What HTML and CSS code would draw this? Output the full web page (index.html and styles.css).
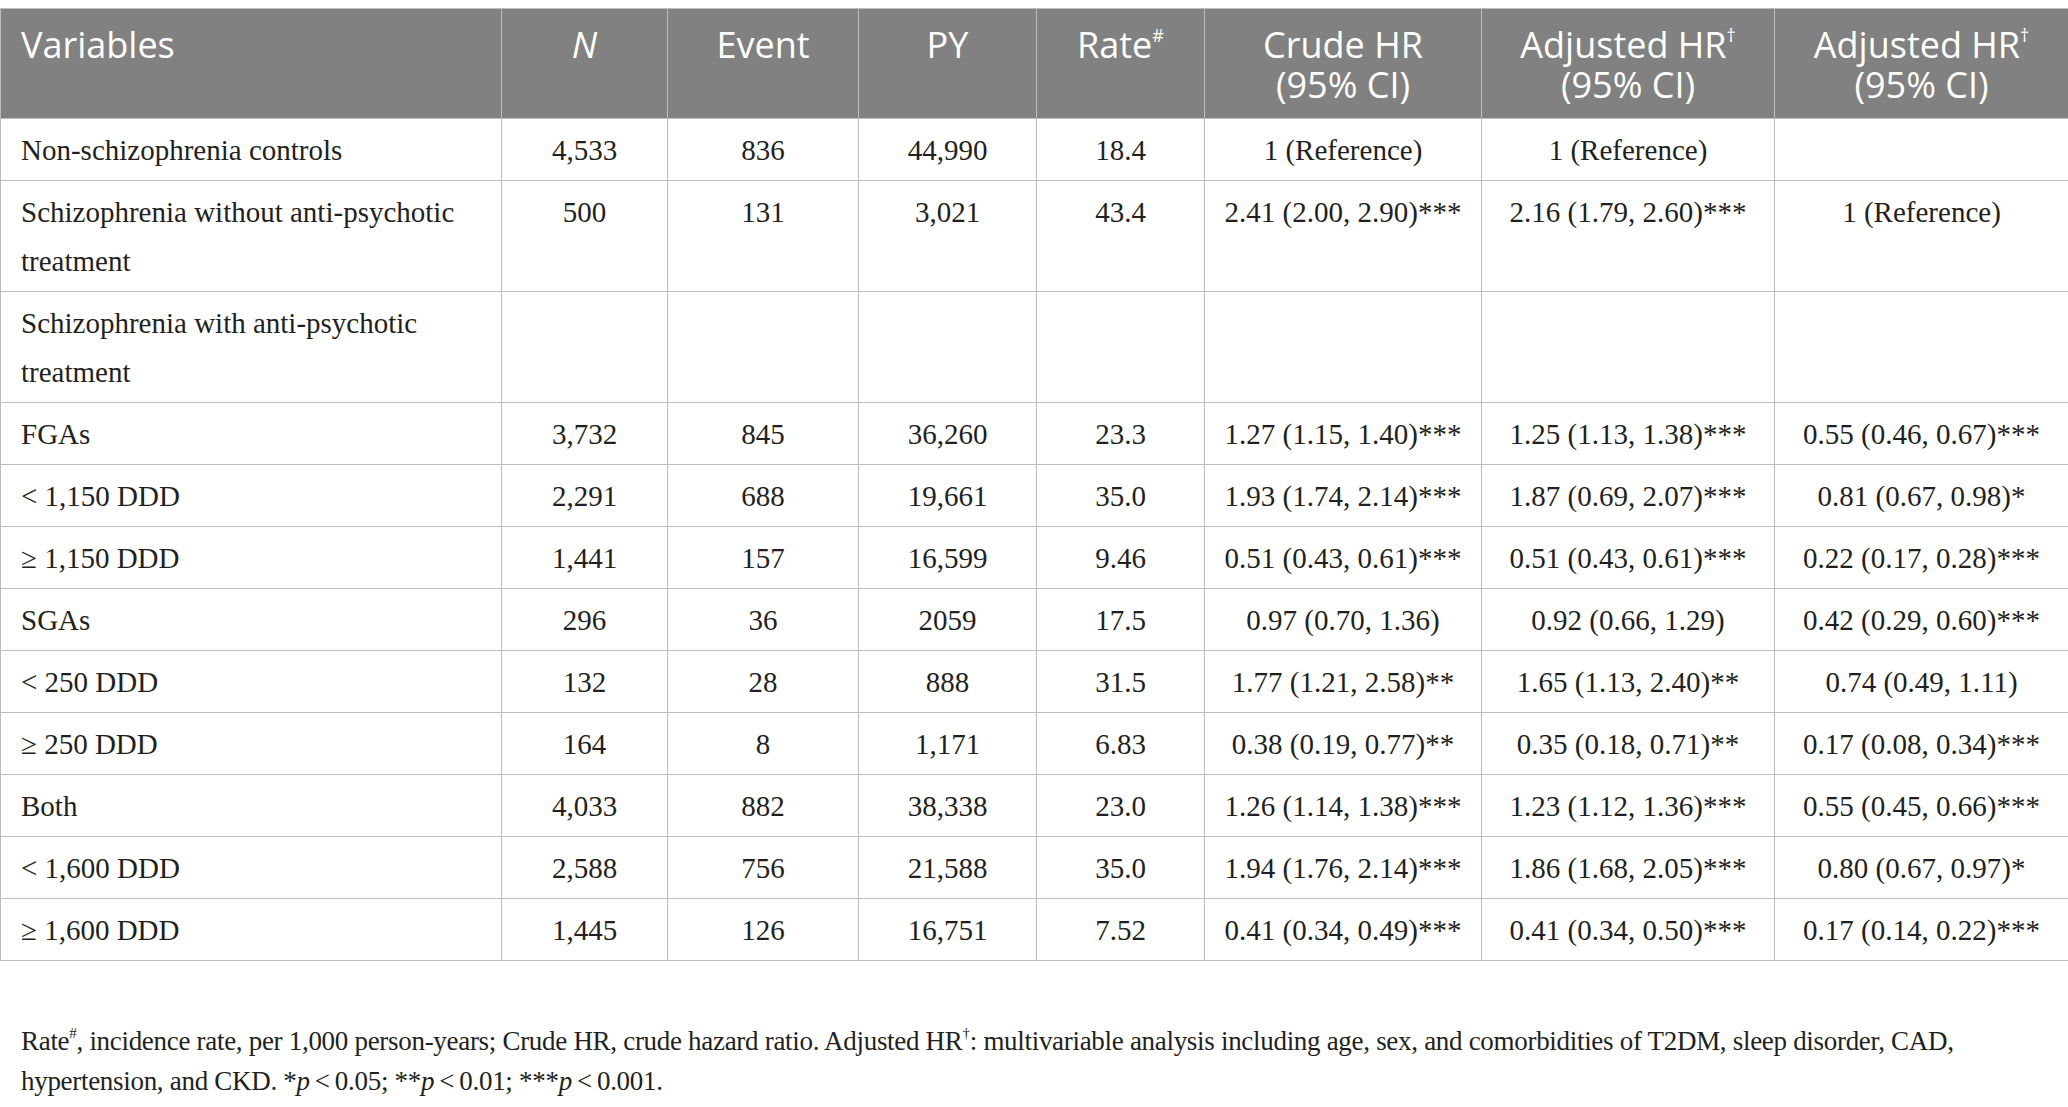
FILE: index.html
```html
<!DOCTYPE html>
<html lang="en">
<head>
    <meta charset="UTF-8">
    <title>Table 2</title>
    <link rel="stylesheet" href="styles.css">
</head>
<body>
<div class="table_wrap">
    <table class="data_table">
        <colgroup>
            <col class="c_var">
            <col class="c_n">
            <col class="c_event">
            <col class="c_py">
            <col class="c_rate">
            <col class="c_crude">
            <col class="c_adj1">
            <col class="c_adj2">
        </colgroup>
        <thead>
        <tr>
            <th class="left">Variables</th>
            <th><i>N</i></th>
            <th>Event</th>
            <th>PY</th>
            <th>Rate<sup>#</sup></th>
            <th>Crude HR<br>(95% CI)</th>
            <th>Adjusted HR<sup>†</sup><br>(95% CI)</th>
            <th>Adjusted HR<sup>†</sup><br>(95% CI)</th>
        </tr>
        </thead>
        <tbody>
        <tr>
            <td class="left">Non-schizophrenia controls</td>
            <td>4,533</td><td>836</td><td>44,990</td><td>18.4</td>
            <td>1 (Reference)</td><td>1 (Reference)</td><td></td>
        </tr>
        <tr>
            <td class="left">Schizophrenia without anti-psychotic treatment</td>
            <td>500</td><td>131</td><td>3,021</td><td>43.4</td>
            <td>2.41 (2.00, 2.90)***</td><td>2.16 (1.79, 2.60)***</td><td>1 (Reference)</td>
        </tr>
        <tr>
            <td class="left">Schizophrenia with anti-psychotic treatment</td>
            <td></td><td></td><td></td><td></td><td></td><td></td><td></td>
        </tr>
        <tr>
            <td class="left">FGAs</td>
            <td>3,732</td><td>845</td><td>36,260</td><td>23.3</td>
            <td>1.27 (1.15, 1.40)***</td><td>1.25 (1.13, 1.38)***</td><td>0.55 (0.46, 0.67)***</td>
        </tr>
        <tr>
            <td class="left">&lt; 1,150 DDD</td>
            <td>2,291</td><td>688</td><td>19,661</td><td>35.0</td>
            <td>1.93 (1.74, 2.14)***</td><td>1.87 (0.69, 2.07)***</td><td>0.81 (0.67, 0.98)*</td>
        </tr>
        <tr>
            <td class="left">≥ 1,150 DDD</td>
            <td>1,441</td><td>157</td><td>16,599</td><td>9.46</td>
            <td>0.51 (0.43, 0.61)***</td><td>0.51 (0.43, 0.61)***</td><td>0.22 (0.17, 0.28)***</td>
        </tr>
        <tr>
            <td class="left">SGAs</td>
            <td>296</td><td>36</td><td>2059</td><td>17.5</td>
            <td>0.97 (0.70, 1.36)</td><td>0.92 (0.66, 1.29)</td><td>0.42 (0.29, 0.60)***</td>
        </tr>
        <tr>
            <td class="left">&lt; 250 DDD</td>
            <td>132</td><td>28</td><td>888</td><td>31.5</td>
            <td>1.77 (1.21, 2.58)**</td><td>1.65 (1.13, 2.40)**</td><td>0.74 (0.49, 1.11)</td>
        </tr>
        <tr>
            <td class="left">≥ 250 DDD</td>
            <td>164</td><td>8</td><td>1,171</td><td>6.83</td>
            <td>0.38 (0.19, 0.77)**</td><td>0.35 (0.18, 0.71)**</td><td>0.17 (0.08, 0.34)***</td>
        </tr>
        <tr>
            <td class="left">Both</td>
            <td>4,033</td><td>882</td><td>38,338</td><td>23.0</td>
            <td>1.26 (1.14, 1.38)***</td><td>1.23 (1.12, 1.36)***</td><td>0.55 (0.45, 0.66)***</td>
        </tr>
        <tr>
            <td class="left">&lt; 1,600 DDD</td>
            <td>2,588</td><td>756</td><td>21,588</td><td>35.0</td>
            <td>1.94 (1.76, 2.14)***</td><td>1.86 (1.68, 2.05)***</td><td>0.80 (0.67, 0.97)*</td>
        </tr>
        <tr>
            <td class="left">≥ 1,600 DDD</td>
            <td>1,445</td><td>126</td><td>16,751</td><td>7.52</td>
            <td>0.41 (0.34, 0.49)***</td><td>0.41 (0.34, 0.50)***</td><td>0.17 (0.14, 0.22)***</td>
        </tr>
        </tbody>
    </table>
</div>
<p class="table_note">Rate<sup>#</sup>, incidence rate, per 1,000 person-years; Crude HR, crude hazard ratio. Adjusted HR<sup>†</sup>: multivariable analysis including age, sex, and comorbidities of T2DM, sleep disorder, CAD, hypertension, and CKD. *<i>p</i>&thinsp;&lt;&thinsp;0.05; **<i>p</i>&thinsp;&lt;&thinsp;0.01; ***<i>p</i>&thinsp;&lt;&thinsp;0.001.</p>
</body>
</html>
```

FILE: styles.css
```css
*{
    margin: 0;
    padding: 0;
}
body{
    background: #ffffff;
    color: #231f20;
    font-family: "Liberation Serif", "Times New Roman", serif;
}
.table_wrap{
    padding-top: 8px;
}
.data_table{
    width: 2068px;
    border-collapse: collapse;
    table-layout: fixed;
}
.c_var{ width: 501px; }
.c_n{ width: 166px; }
.c_event{ width: 191px; }
.c_py{ width: 178px; }
.c_rate{ width: 168px; }
.c_crude{ width: 277px; }
.c_adj1{ width: 293px; }
.c_adj2{ width: 294px; }
.data_table th{
    background: #808180;
    color: #ffffff;
    font-family: "Open Sans", "Noto Sans", sans-serif;
    font-weight: normal;
    font-size: 36px;
    line-height: 40px;
    padding: 16px 8px 13px;
    text-align: center;
    vertical-align: top;
    border: 1px solid #bdbdbd;
}
.data_table th sup{
    font-size: 18px;
    line-height: 0;
    vertical-align: 16px;
}
.data_table td{
    font-size: 29px;
    line-height: 49px;
    padding: 7px 8px 5px;
    text-align: center;
    vertical-align: top;
    white-space: nowrap;
    border: 1px solid #bdbdbd;
}
.data_table .left{
    text-align: left;
    padding-left: 20px;
    white-space: normal;
}
.table_note{
    margin-top: 60px;
    padding: 0 21px;
    font-size: 27px;
    letter-spacing: -0.3px;
    line-height: 40px;
}
.table_note sup{
    font-size: 15px;
    line-height: 0;
    vertical-align: 12px;
}
```
